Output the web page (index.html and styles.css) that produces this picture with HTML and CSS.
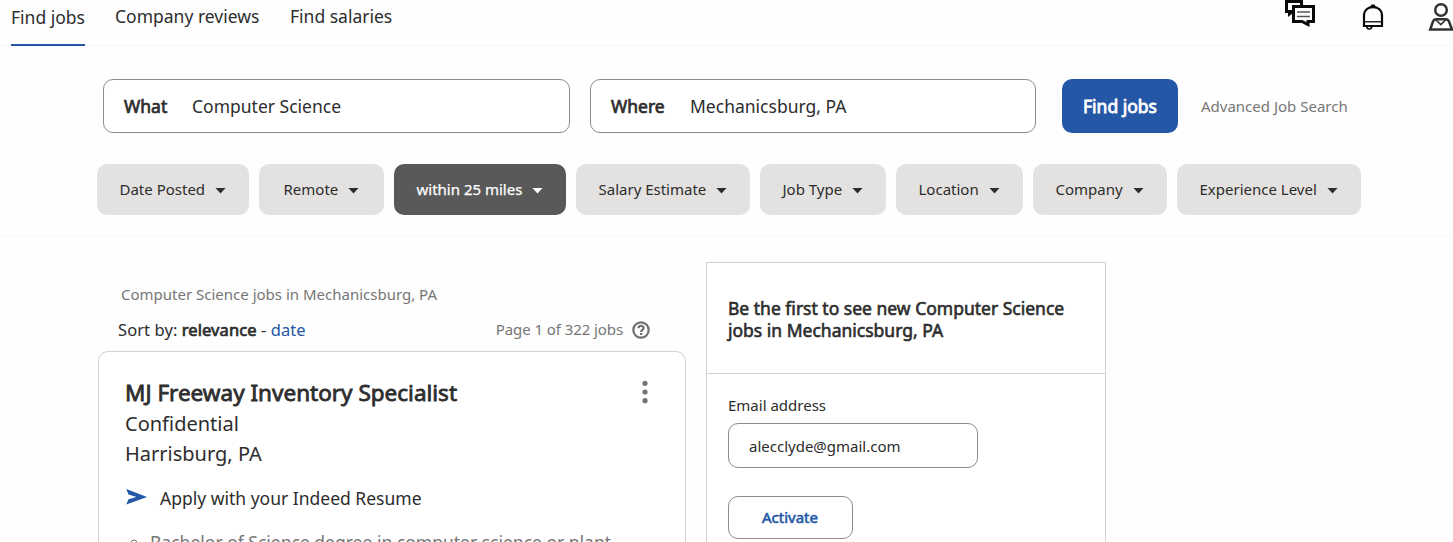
FILE: index.html
```html
<!DOCTYPE html>
<html lang="en">
<head>
<meta charset="utf-8">
<title>Computer Science Jobs in Mechanicsburg, PA</title>
<link rel="stylesheet" href="styles.css">
</head>
<body>
<header class="topbar">
  <nav class="nav">
    <a class="nav-link nav-active">Find jobs</a>
    <a class="nav-link">Company reviews</a>
    <a class="nav-link">Find salaries</a>
  </nav>
  <div class="tools">
    <svg class="ico-chat" width="32" height="30" viewBox="0 0 32 30" fill="none" stroke="#0a0a0a" stroke-width="3">
      <path d="M8 11.500H2.500V1.500H17.500V5" />
      <path d="M4 12V17L9 13V12Z" fill="#0a0a0a" stroke="none"/>
      <path d="M9.500 6.500H29.500V21.500H24V24.500L18 21.500H9.500Z"/>
      <path d="M13 12H26M13 16.500H26" stroke="#555" stroke-width="1.500"/>
    </svg>
    <svg class="ico-bell" width="22" height="27" viewBox="0 0 22 27" fill="none" stroke="#0a0a0a" stroke-width="2.200">
      <path d="M2 22V12C2 6 6 3.200 11 3.200S20 6 20 12V22Z"/>
      <path d="M2 17.800H20" stroke-width="1.300"/>
      <path d="M7.500 4L9.500 0.500H12.500L14.500 4Z" fill="#0a0a0a" stroke="none"/>
      <path d="M4.700 22.500C5 25.800 9.500 25.800 9.800 22.500" stroke-width="1.600"/>
    </svg>
    <svg class="ico-user" width="25" height="29" viewBox="0 0 25 29" fill="none" stroke="#333" stroke-width="2.500">
      <circle cx="13" cy="8" r="5.800"/>
      <path d="M2.200 27.500L5 19.500Q6 17.200 8 17.200H18Q20 17.200 21 19.500L24 27.500Z"/>
      <path d="M8 18L12.800 22.500L17.500 18" stroke-width="1.700"/>
    </svg>
  </div>
</header>
<section class="search">
  <div class="search-row">
    <label class="field field-what"><b>What</b><span>Computer Science</span></label>
    <label class="field field-where"><b>Where</b><span>Mechanicsburg, PA</span></label>
    <button class="find">Find jobs</button>
    <a class="advanced">Advanced Job Search</a>
  </div>
  <div class="filters">
    <button class="pill pill-date">Date Posted<i></i></button>
    <button class="pill pill-remote">Remote<i></i></button>
    <button class="pill pill-miles">within 25 miles<i></i></button>
    <button class="pill pill-salary">Salary Estimate<i></i></button>
    <button class="pill pill-type">Job Type<i></i></button>
    <button class="pill pill-loc">Location<i></i></button>
    <button class="pill pill-company">Company<i></i></button>
    <button class="pill pill-exp">Experience Level<i></i></button>
  </div>
</section>
<main class="main">
  <section class="results">
    <h1 class="summary">Computer Science jobs in Mechanicsburg, PA</h1>
    <div class="sort-row">
      <div class="sort">Sort by: <b>relevance</b> - <a>date</a></div>
      <div class="count">Page 1 of 322 jobs</div>
      <svg class="help" width="20" height="20" viewBox="0 0 20 20" fill="none" stroke="#6f6f6f" stroke-width="2.200">
        <circle cx="10" cy="10" r="7.700"/>
        <path d="M7.500 8.300C7.500 4.900 12.500 5 12.500 8C12.500 9.900 10.100 9.800 10.100 12"/>
        <path d="M10.100 13V15"/>
      </svg>
    </div>
    <article class="card">
      <div class="card-head">
        <h2>MJ Freeway Inventory Specialist</h2>
        <svg width="6" height="24" viewBox="0 0 6 24" fill="#767676"><circle cx="3" cy="3.300" r="2.600"/><circle cx="3" cy="12" r="2.600"/><circle cx="3" cy="20.700" r="2.600"/></svg>
      </div>
      <p class="company">Confidential</p>
      <p class="place">Harrisburg, PA</p>
      <div class="apply">
        <svg width="22" height="16" viewBox="0 0 22 16" fill="#2557a7"><path d="M0.300 0L21 8L0.300 15.500L2.500 10.300L10.500 8L2.500 5.500Z"/></svg>
        <span>Apply with your Indeed Resume</span>
      </div>
      <ul class="details"><li>Bachelor of Science degree in computer science or plant</li></ul>
    </article>
  </section>
  <aside class="alert">
    <h2 class="alert-title">Be the first to see new Computer Science<br>jobs in Mechanicsburg, PA</h2>
    <div class="alert-body">
      <label class="email-label">Email address</label>
      <div class="email">alecclyde@gmail.com</div>
      <button class="activate">Activate</button>
    </div>
  </aside>
</main>
</body>
</html>
```
FILE: styles.css
```css
* { box-sizing: border-box; }
html, body { height: 542px; overflow: hidden; }
body { display: flex; flex-direction: column; margin: 0; background: #fefefe; color: #2d2d2d; font-family: "Noto Sans", sans-serif; font-size: 17.500px; }
button { font: inherit; color: inherit; border: 0; padding: 0; text-align: left; }
h1, h2, p, ul { margin: 0; padding: 0; font-weight: 400; }
span, a, b, h1, h2, p, li, button, .email, .sort, .count { white-space: nowrap; }
b { font-weight: 400; -webkit-text-stroke: 0.7px currentColor; }

.topbar { display: flex; flex: none; justify-content: space-between; height: 46px; border-bottom: 1px solid #f6f6f6; }
.nav { display: flex; gap: 30px; padding-left: 11px; }
.nav-link { height: 46px; line-height: 32px; }
.nav-active { width: 74px; line-height: 34px; border-bottom: 2px solid #2557a7; }
.nav-active + .nav-link { width: 145px; }
.tools { display: flex; }
.ico-chat { margin-right: 46px; }
.ico-bell { margin: 4px 44px 0 0; }
.ico-user { margin: 2px 0 0; flex: none; }

.search { flex: none; height: 190px; padding-top: 33px; border-bottom: 1px solid #f6f6f6; }
.search-row { display: flex; align-items: center; height: 54px; padding-left: 103px; }
.field { display: flex; height: 54px; line-height: 53px; padding-left: 20px; border: 1px solid #8c8c8c; border-radius: 10px; background: #fff; }
.field-what { width: 467px; margin-right: 20px; }
.field-where { width: 446px; margin-right: 26px; }
.field-what b { width: 68px; }
.field-where b { width: 79px; }
.find { width: 116px; height: 54px; line-height: 54px; padding-left: 21px; border-radius: 10px; background: #2557a7; color: #fff; -webkit-text-stroke: 0.8px currentColor; }
.advanced { margin-left: 23px; font-size: 15px; color: #767676; }

.filters { display: flex; gap: 10px; margin-top: 31px; padding-left: 97px; }
.pill { display: flex; align-items: center; justify-content: space-between; height: 51px; padding: 0 23px 2px 22.500px; border-radius: 10px; background: #e4e2e0; font-size: 15px; }
.pill i { width: 11px; height: 6px; margin-top: 4px; background: currentColor; clip-path: polygon(0 0, 100% 0, 50% 100%); }
.pill-date { width: 152px; }
.pill-remote { width: 125px; padding: 0 25px 2px 24.500px; }
.pill-miles { width: 172px; background: #595959; color: #fff; -webkit-text-stroke: 0.25px currentColor; }
.pill-salary { width: 174px; }
.pill-type { width: 126px; }
.pill-loc { width: 127px; }
.pill-company { width: 134px; }
.pill-exp { width: 184px; }

.main { display: flex; flex: 1; min-height: 0; overflow: hidden; padding-left: 98px; }
.results { display: flex; flex-direction: column; width: 588px; padding-top: 46px; }
.summary { flex: none; padding-left: 23px; height: 24px; line-height: 24px; font-size: 15px; color: #767676; }
.sort-row { display: flex; flex: none; align-items: center; height: 26px; margin: 11px 0 8px; padding: 0 35px 0 20px; }
.sort { font-size: 16.500px; letter-spacing: 0.080px; line-height: 24px; }
.sort a { color: #2557a7; }
.count { margin: 0 0 2px auto; font-size: 15px; letter-spacing: -0.080px; color: #767676; }
.help { margin-left: 8px; }
.card { flex: 1; min-height: 0; overflow: hidden; padding: 25px 38px 0 26px; border: 1px solid #d4d2d0; border-bottom: 0; border-radius: 10px 10px 0 0; background: #fff; }
.card-head { display: flex; align-items: center; justify-content: space-between; height: 30px; }
.card-head svg { margin-right: -1px; }
.card h2 { font-size: 22.500px; -webkit-text-stroke: 0.8px currentColor; }
.company, .place { height: 30px; line-height: 30px; font-size: 20px; }
.company { margin-top: 2px; }
.apply { display: flex; align-items: center; height: 28px; margin-top: 15px; padding-left: 1px; }
.apply svg { margin-right: 12px; margin-top: -3px; }
.details { margin: 17px 0 0 25px; font-size: 17.500px; line-height: 26px; color: #767676; list-style: circle; }

.alert { width: 400px; margin: 26px 0 0 20px; border: 1px solid #d4d2d0; border-bottom: 0; background: #fff; }
.alert-title { height: 111px; padding: 34px 0 0 21px; border-bottom: 1px solid #d4d2d0; font-size: 17.500px; line-height: 22px; -webkit-text-stroke: 0.6px currentColor; }
.alert-body { padding: 19px 0 0 21px; font-size: 15px; }
.email-label { display: block; height: 24px; line-height: 24px; }
.email { width: 250px; height: 45px; line-height: 45px; margin-top: 6px; padding-left: 20px; border: 1px solid #8c8c8c; border-radius: 10px; }
.activate { display: block; width: 125px; height: 43px; margin-top: 28px; padding: 0 0 2px 33px; border: 1px solid #8c8c8c; border-radius: 10px; background: #fff; color: #2557a7; -webkit-text-stroke: 0.6px currentColor; }
```
